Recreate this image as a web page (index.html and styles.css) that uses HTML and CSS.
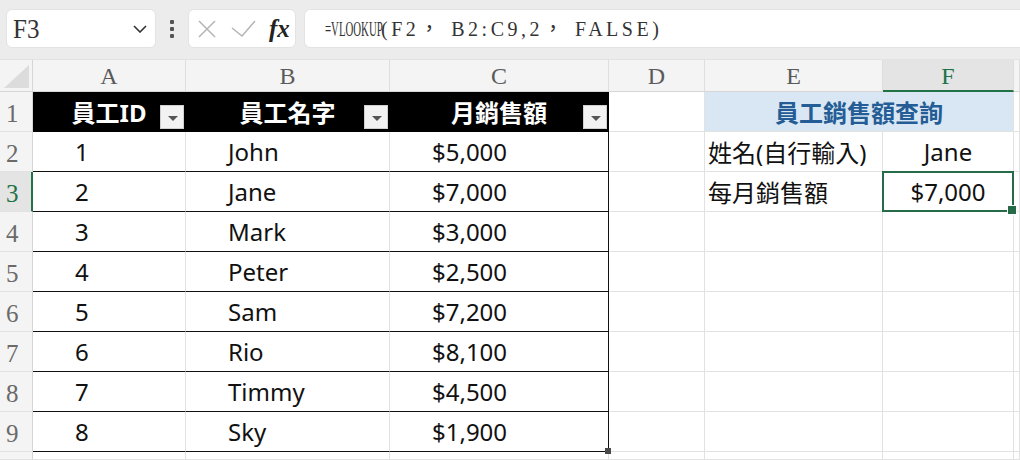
FILE: index.html
```html
<!DOCTYPE html>
<html lang="zh-Hant">
<head>
<meta charset="utf-8">
<title>員工銷售額查詢</title>
<link rel="stylesheet" href="styles.css">
</head>
<body>
<div class="toolbar">
  <div class="namebox">
    <span class="ref">F3</span>
    <svg class="chev" width="14" height="8" viewBox="0 0 14 8"><path d="M1 1 L7 7 L13 1" fill="none" stroke="#333" stroke-width="1.6"/></svg>
  </div>
  <div class="dots"><i></i><i></i><i></i></div>
  <div class="fxbox">
    <svg width="18" height="18" viewBox="0 0 18 18"><path d="M1 1 L17 17 M17 1 L1 17" stroke="#b4b4b4" stroke-width="1.5" fill="none"/></svg>
    <svg width="25" height="17" viewBox="0 0 25 17"><path d="M1 8 L11 16 L24 1" stroke="#b4b4b4" stroke-width="1.5" fill="none"/></svg>
    <span class="fx">fx</span>
  </div>
  <div class="formula"><span class="ftext"><span class="fn">=VLOOKUP</span><span class="args">(F2， B2:C9,2， FALSE)</span></span></div>
</div>

<div class="sheet">
  <div class="corner"><svg width="33" height="32" viewBox="0 0 33 32"><polygon points="4,28 29,28 29,5" fill="#dcdcdc"/></svg></div>
  <div class="ch">A</div><div class="ch">B</div><div class="ch">C</div><div class="ch">D</div><div class="ch">E</div><div class="ch sel">F</div><div class="ch"></div>

  <div class="rh">1</div>
  <div class="c th">員工ID<span class="filt"></span></div>
  <div class="c th">員工名字<span class="filt"></span></div>
  <div class="c th">月銷售額<span class="filt"></span></div>
  <div class="c"></div>
  <div class="c title">員工銷售額查詢</div>
  <div class="c"></div>

  <div class="rh">2</div>
  <div class="c tb">1</div><div class="c tb">John</div><div class="c tb lastc">$5,000</div>
  <div class="c"></div><div class="c lbl">姓名(自行輸入)</div><div class="c ctr">Jane</div><div class="c"></div>

  <div class="rh rsel">3</div>
  <div class="c tb">2</div><div class="c tb">Jane</div><div class="c tb lastc">$7,000</div>
  <div class="c"></div><div class="c lbl">每月銷售額</div><div class="c ctr active">$7,000</div><div class="c"></div>

  <div class="rh">4</div>
  <div class="c tb">3</div><div class="c tb">Mark</div><div class="c tb lastc">$3,000</div>
  <div class="c"></div><div class="c"></div><div class="c"></div><div class="c"></div>

  <div class="rh">5</div>
  <div class="c tb">4</div><div class="c tb">Peter</div><div class="c tb lastc">$2,500</div>
  <div class="c"></div><div class="c"></div><div class="c"></div><div class="c"></div>

  <div class="rh">6</div>
  <div class="c tb">5</div><div class="c tb">Sam</div><div class="c tb lastc">$7,200</div>
  <div class="c"></div><div class="c"></div><div class="c"></div><div class="c"></div>

  <div class="rh">7</div>
  <div class="c tb">6</div><div class="c tb">Rio</div><div class="c tb lastc">$8,100</div>
  <div class="c"></div><div class="c"></div><div class="c"></div><div class="c"></div>

  <div class="rh">8</div>
  <div class="c tb">7</div><div class="c tb">Timmy</div><div class="c tb lastc">$4,500</div>
  <div class="c"></div><div class="c"></div><div class="c"></div><div class="c"></div>

  <div class="rh">9</div>
  <div class="c tb">8</div><div class="c tb">Sky</div><div class="c tb lastc endc">$1,900</div>
  <div class="c"></div><div class="c"></div><div class="c"></div><div class="c"></div>

  <div class="rh"></div>
  <div class="c"></div><div class="c"></div><div class="c"></div>
  <div class="c"></div><div class="c"></div><div class="c"></div><div class="c"></div>
</div>
</body>
</html>
```

FILE: styles.css
```css
* { box-sizing: border-box; }
html, body { margin: 0; padding: 0; }
body {
  width: 1020px;
  height: 460px;
  overflow: hidden;
  background: #ffffff;
  font-family: "Noto Sans", "Noto Sans CJK TC", sans-serif;
}

.toolbar {
  height: 60px;
  background: #ececec;
  display: flex;
  align-items: flex-start;
  padding: 9px 0 0 6px;
  border-bottom: 1px solid #e2e2e2;
}
.namebox {
  width: 150px;
  height: 39px;
  background: #fff;
  border-radius: 6px;
  border: 1px solid #e3e3e3;
  display: flex;
  align-items: center;
  justify-content: space-between;
  padding: 0 8px 0 6px;
}
.ref {
  font-family: "Liberation Serif", serif;
  font-size: 25px;
  color: #333;
  transform: scaleY(1.1);
}
.dots {
  width: 32px;
  height: 39px;
  display: flex;
  flex-direction: column;
  align-items: center;
  justify-content: center;
  gap: 3px;
}
.dots i {
  width: 4px;
  height: 4px;
  background: #555;
  border-radius: 1px;
}
.fxbox {
  width: 108px;
  height: 39px;
  background: #fff;
  border-radius: 6px;
  border: 1px solid #e3e3e3;
  display: flex;
  align-items: center;
  padding: 0 0 0 9px;
  gap: 15px;
}
.fx {
  font-family: "Liberation Serif", serif;
  font-style: italic;
  font-weight: bold;
  font-size: 25px;
  color: #222;
  margin-left: -2px;
}
.formula {
  margin-left: 8px;
  flex: 1;
  height: 39px;
  background: #fff;
  border-radius: 6px 0 0 6px;
  border: 1px solid #e3e3e3;
  border-right: none;
  display: flex;
  align-items: center;
  padding-left: 20px;
  font-family: "Liberation Serif", "Noto Sans CJK TC", serif;
  font-size: 20px;
  color: #333;
  white-space: pre;
}
.ftext {
  line-height: 24px;
}
.fn {
  display: inline-block;
  width: 56px;
  transform: scaleX(0.54);
  transform-origin: left center;
}
.args {
  letter-spacing: 3.5px;
}

.sheet {
  display: grid;
  grid-template-columns: 33px 153px 204px 219px 96px 178px 131px 1fr;
  grid-template-rows: 32px repeat(9, 40px) 1fr;
  height: 400px;
}
.corner {
  background: #f4f4f4;
  border-right: 1px solid #d6d6d6;
  border-bottom: 1px solid #d6d6d6;
}
.corner svg { display: block; }
.ch {
  background: #f4f4f4;
  border-right: 1px solid #dedede;
  border-bottom: 1px solid #d6d6d6;
  font-family: "Liberation Serif", serif;
  font-size: 24px;
  color: #5a5a5a;
  display: flex;
  align-items: center;
  justify-content: center;
  padding-top: 2px;
}
.ch.sel {
  background: #e4e4e4;
  color: #217346;
  border-bottom: 2px solid #217346;
}
.rh {
  background: #f4f4f4;
  border-right: 1px solid #d6d6d6;
  border-bottom: 1px solid #e2e2e2;
  font-family: "Liberation Serif", serif;
  font-size: 25px;
  color: #6a6a6a;
  display: flex;
  align-items: center;
  padding: 4px 0 0 6px;
}
.rh.rsel {
  background: #e4e4e4;
  color: #217346;
  border-right: 2px solid #217346;
}
.c {
  border-right: 1px solid #e2e2e2;
  border-bottom: 1px solid #e2e2e2;
  font-size: 24px;
  color: #111;
  display: flex;
  align-items: center;
  white-space: nowrap;
  position: relative;
}
.th {
  background: #000;
  color: #fff;
  font-weight: bold;
  justify-content: center;
  border-right-color: #000;
  border-bottom-color: #000;
}
.filt {
  position: absolute;
  right: 1px;
  bottom: 2px;
  width: 24px;
  height: 24px;
  background: #f2f2f2;
  border: 1px solid #d0d0d0;
}
.filt::after {
  content: "";
  position: absolute;
  left: 7px;
  top: 10px;
  border-left: 5px solid transparent;
  border-right: 5px solid transparent;
  border-top: 5px solid #555;
}
.tb {
  padding-left: 42px;
  border-bottom: 1.5px solid #111;
}
.tb.lastc {
  border-right: 1.5px solid #111;
}
.endc::after {
  content: "";
  position: absolute;
  z-index: 3;
  right: -3px;
  bottom: -3px;
  width: 6px;
  height: 6px;
  background: #4a4a4a;
}
.title {
  grid-column: span 2;
  background: #d9e7f4;
  color: #245d95;
  font-weight: bold;
  justify-content: center;
}
.lbl {
  padding-left: 3px;
}
.ctr {
  justify-content: center;
}
.active {
  border: 2px solid #256b47;
  margin: -1px 0 0 -1px;
  z-index: 2;
}
.active::after {
  content: "";
  position: absolute;
  z-index: 3;
  right: -5px;
  bottom: -5px;
  width: 8px;
  height: 8px;
  background: #256b47;
  border: 1px solid #fff;
}
```
